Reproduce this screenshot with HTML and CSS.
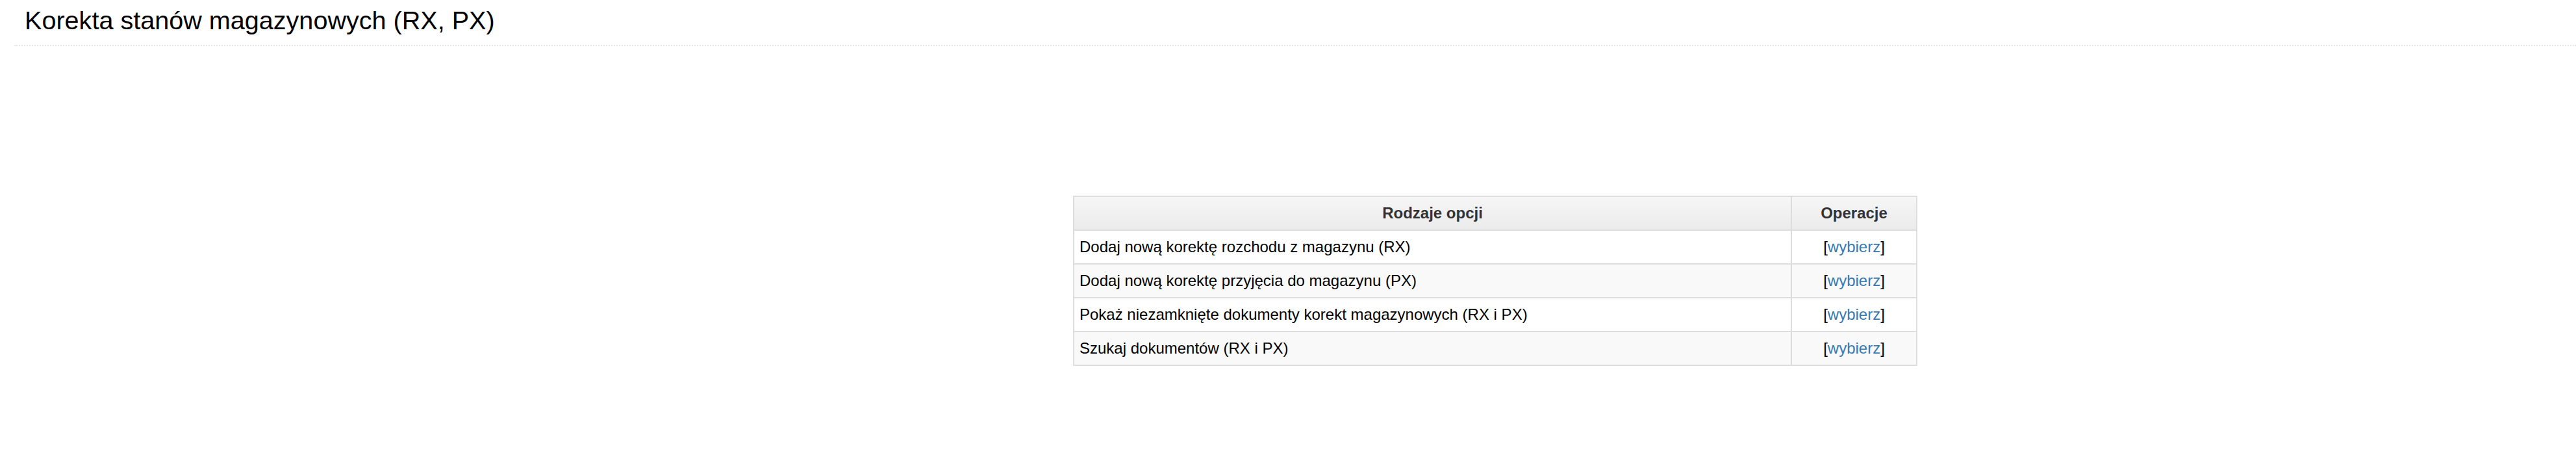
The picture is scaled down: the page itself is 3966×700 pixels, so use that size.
FILE: index.html
```html
<!DOCTYPE html>
<html lang="pl">
<head>
<meta charset="utf-8">
<title>Korekta stanów magazynowych (RX, PX)</title>
<link rel="stylesheet" href="styles.css">
</head>
<body>
<header class="page-header">
  <h1 class="page-title">Korekta stanów magazynowych (RX, PX)</h1>
</header>
<div class="layout">
  <aside class="sidebar"></aside>
  <main class="content">
    <table class="options">
      <colgroup>
        <col class="col-name">
        <col class="col-ops">
      </colgroup>
      <thead>
        <tr><th>Rodzaje opcji</th><th>Operacje</th></tr>
      </thead>
      <tbody>
        <tr><td>Dodaj nową korektę rozchodu z magazynu (RX)</td><td class="ops">[<a href="#">wybierz</a>]</td></tr>
        <tr><td>Dodaj nową korektę przyjęcia do magazynu (PX)</td><td class="ops">[<a href="#">wybierz</a>]</td></tr>
        <tr><td>Pokaż niezamknięte dokumenty korekt magazynowych (RX i PX)</td><td class="ops">[<a href="#">wybierz</a>]</td></tr>
        <tr><td>Szukaj dokumentów (RX i PX)</td><td class="ops">[<a href="#">wybierz</a>]</td></tr>
      </tbody>
    </table>
  </main>
</div>
</body>
</html>
```
FILE: styles.css
```css
html, body {
  margin: 0;
  padding: 0;
  background: #fff;
}
body {
  font-family: "Liberation Sans", Arial, Helvetica, sans-serif;
  color: #000;
}
.page-header {
  margin-left: 22px;
  border-bottom: 2px dotted #e6e6e6;
  padding: 8px 0 15px 16px;
}
.page-title {
  margin: 0;
  font-size: 39.6px;
  font-weight: normal;
  line-height: 46px;
  color: #000;
}
.layout {
  display: grid;
  grid-template-columns: 638px 1fr;
  padding-top: 230px;
}
.content {
  display: flex;
  justify-content: center;
}
.options {
  width: 1300px;
  border-collapse: collapse;
  font-size: 24px;
  line-height: 28px;
}
.col-ops {
  width: 193px;
}
.options th,
.options td {
  border: 2px solid #dddddd;
  padding: 11px 8px;
  text-align: left;
}
.options th {
  text-align: center;
  font-weight: bold;
  color: #333;
  background: linear-gradient(#f6f6f6, #ebebeb);
}
.options tbody tr:nth-child(even) td {
  background: #f9f9f9;
}
.options td.ops {
  text-align: center;
}
.options a {
  color: #337ab7;
  text-decoration: none;
}
```
